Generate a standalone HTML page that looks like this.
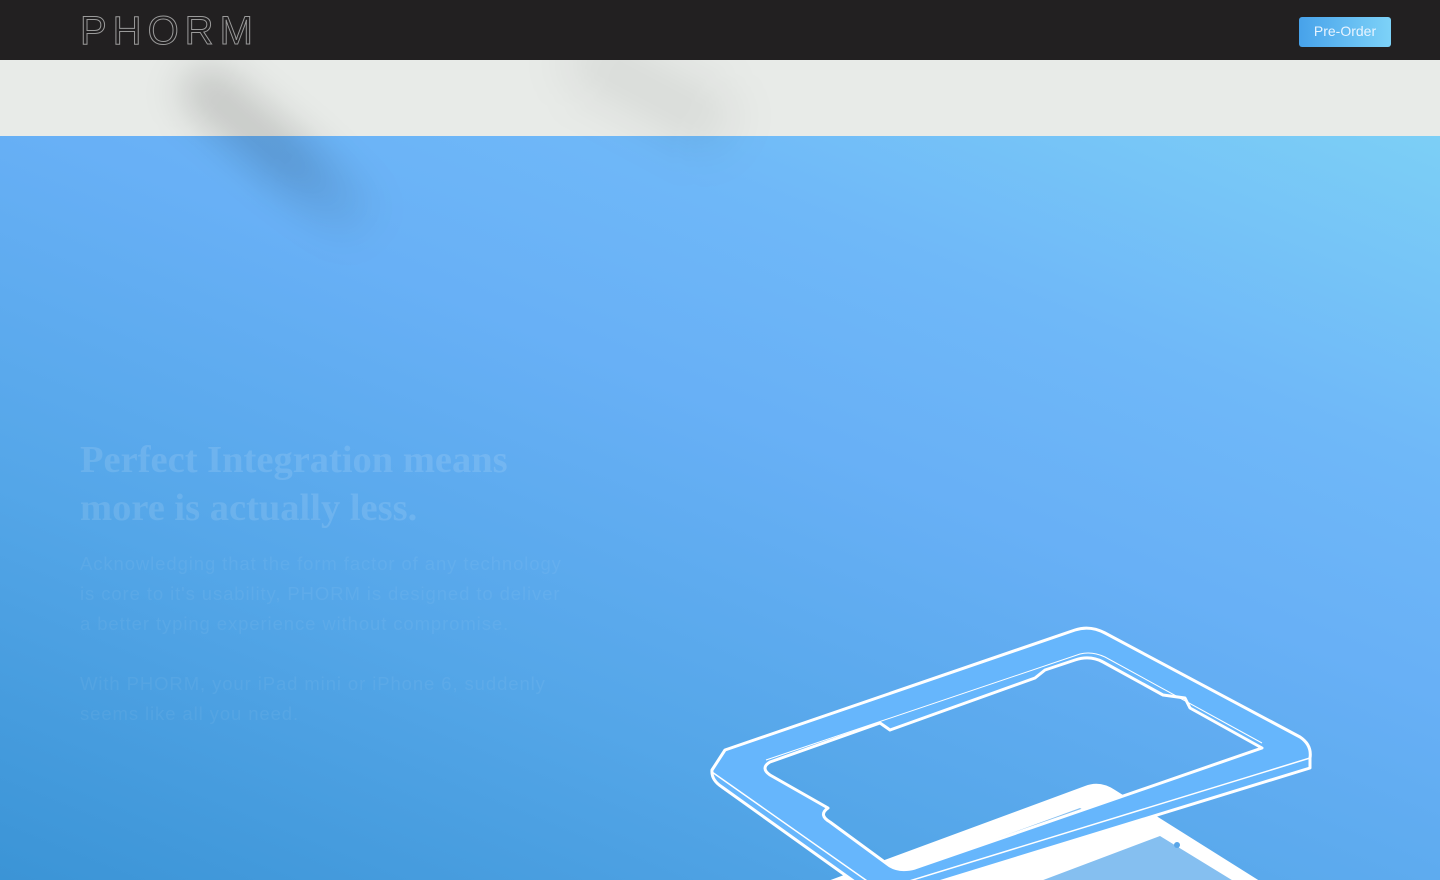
<!DOCTYPE html>
<html><head><meta charset="utf-8"><style>
*{margin:0;padding:0;box-sizing:border-box}
html,body{width:1440px;height:880px;overflow:hidden}
body{position:relative;background:#e8ebe8;font-family:"Liberation Sans",sans-serif}
.nav{position:absolute;left:0;top:0;width:1440px;height:60px;background:#222021;z-index:5}
.logo{position:absolute;left:80px;top:9px;font-size:40px;font-weight:100;letter-spacing:6px;color:transparent;-webkit-text-stroke:1px #9a9a9a;font-family:"Liberation Sans",sans-serif}
.btn{position:absolute;left:1299px;top:17px;width:92px;height:30px;border-radius:3px;background:linear-gradient(90deg,#47a2ea,#7dd2f8);color:#e8f4ff;font-size:14px;text-align:center;line-height:29px}
.gray{position:absolute;left:0;top:60px;width:1440px;height:76px;background:#e8ebe8}
.hero{position:absolute;left:0;top:136px;width:1440px;height:744px;overflow:hidden;
background:linear-gradient(22deg,#3b94d6 0%,#54a6e8 30%,#68b0f6 58%,#6fb8f8 75%,#7ccff6 100%)}
.shwrap{position:absolute;left:0;top:60px;width:1440px;height:820px;overflow:hidden;z-index:3;pointer-events:none}
.sh{position:absolute;border-radius:40px}
h1{position:absolute;left:80px;top:300px;font-family:"Liberation Serif",serif;font-size:38.5px;font-weight:bold;line-height:48px;color:rgba(255,255,255,0.12)}
p{position:absolute;left:80px;font-size:18.5px;font-weight:300;line-height:30px;color:rgba(255,255,255,0.06);width:495px;letter-spacing:.9px}
</style></head><body>
<div class="nav"><div class="logo">PHORM</div><div class="btn">Pre-Order</div></div>
<div class="gray"></div>
<div class="hero">
<h1>Perfect Integration means<br>more is actually less.</h1>
<p style="top:413px">Acknowledging that the form factor of any technology<br>is core to it's usability, PHORM is designed to deliver a better typing experience without compromise.</p>
<p style="top:533px">With PHORM, your iPad mini or iPhone 6, suddenly seems like all you need.</p>
<svg width="1440" height="744" style="position:absolute;left:0;top:0" viewBox="0 136 1440 744">
 <path d="M790 895 L1085 786 Q1100 780 1115 790 L1290 900 Z" fill="#fff"/>
 <path d="M905 872 L1080 808 L1100 820 L925 884 Z" fill="#85bff0"/>
 <path d="M1030 885 L1160 836 L1240 885 Z" fill="#85bff0"/>
 <circle cx="1177" cy="845" r="3" fill="#5aa6e8"/>
 <path fill-rule="evenodd" fill="#66b6fc" stroke="#fff" stroke-width="3" stroke-linejoin="round"
 d="M725 750 L1075 630 Q1090 625 1105 633 L1300 737 Q1312 745 1310 758 L1310 768 L880 900 L722 787 Q711 780 712 770 Z
 M770 762 L880 723 L890 730 L1035 678 L1045 670 L1075 660 Q1090 655 1103 662 L1163 695 L1185 698 L1190 708 L1262 748 L915 868 Q900 872 890 866 L830 822 Q818 815 828 808 L770 775 Q760 768 770 762 Z"/>
 <path d="M712 772 L880 890 L1310 758" fill="none" stroke="#fff" stroke-width="1.5"/>
 <path d="M766 760 L1080 654 Q1092 651 1105 657 L1262 743" fill="none" stroke="#fff" stroke-width="1"/>
</svg>
</div>
<div class="shwrap">
<div class="sh" style="left:255px;top:-30px;width:56px;height:250px;background:linear-gradient(180deg,rgba(0,0,0,.14),rgba(0,0,0,.14) 55%,rgba(0,0,0,0));transform:rotate(-50deg);filter:blur(18px)"></div>
<div class="sh" style="left:620px;top:-60px;width:60px;height:180px;background:rgba(0,0,0,.07);transform:rotate(-62deg);filter:blur(24px)"></div>
</div>
</body></html>
